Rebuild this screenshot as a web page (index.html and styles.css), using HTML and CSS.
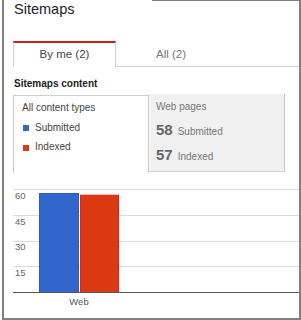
FILE: index.html
```html
<!DOCTYPE html>
<html>
<head>
<meta charset="utf-8">
<link rel="stylesheet" href="styles.css">
</head>
<body>
<div class="frame">
  <h1 class="title">Sitemaps</h1>
  <div class="tabs">
    <div class="tab tab-active">By me (2)</div>
    <div class="tab tab-rest">All (2)</div>
  </div>
  <div class="section-head">Sitemaps content</div>
  <div class="panels">
    <div class="panel-left">
      <div class="line">All content types</div>
      <div class="line legend"><span class="sq sq-blue"></span>Submitted</div>
      <div class="line legend"><span class="sq sq-red"></span>Indexed</div>
    </div>
    <div class="panel-right">
      <div class="pr-head">Web pages</div>
      <div class="stat"><span class="num">58</span><span class="lbl">Submitted</span></div>
      <div class="stat"><span class="num">57</span><span class="lbl">Indexed</span></div>
    </div>
  </div>
  <svg class="chart" width="286" height="138" viewBox="0 0 286 138">
    <g stroke="#dcdcdc" stroke-width="1">
      <line x1="0" y1="7.5" x2="286" y2="7.5"/>
      <line x1="0" y1="33.5" x2="286" y2="33.5"/>
      <line x1="0" y1="59.5" x2="286" y2="59.5"/>
      <line x1="0" y1="84.5" x2="286" y2="84.5"/>
    </g>
    <g class="axis-lbl">
      <text x="2" y="16.5">60</text>
      <text x="2" y="42.5">45</text>
      <text x="2" y="68">30</text>
      <text x="2" y="93.5">15</text>
    </g>
    <rect x="26.5" y="11.5" width="39" height="99" fill="#3366cc" stroke="#2a59c0"/>
    <rect x="67.5" y="13.2" width="38" height="97.3" fill="#dc3912" stroke="#e6201a"/>
    <line x1="0" y1="110.5" x2="286" y2="110.5" stroke="#555" stroke-width="1"/>
    <text class="cat-lbl" x="66" y="122.7" text-anchor="middle">Web</text>
  </svg>
</div>
</body>
</html>
```
FILE: styles.css
```css
html, body {
  margin: 0;
  padding: 0;
  background: #fff;
}
body {
  font-family: "Liberation Sans", Arial, sans-serif;
}
.frame {
  position: relative;
  box-sizing: border-box;
  margin-left: 2px;
  width: 299px;
  height: 320px;
  border-left: 2px solid #808080;
  border-right: 2px solid #808080;
  border-bottom: 2px solid #808080;
  padding-left: 9px;
  overflow: hidden;
}
.frame::before {
  content: "";
  position: absolute;
  top: 0;
  left: 148px;
  right: 0;
  height: 1px;
  background: #808080;
}
.title {
  margin: 0;
  padding-left: 1px;
  font-size: 14.5px;
  line-height: 18px;
  font-weight: normal;
  color: #222;
}
.tabs {
  display: flex;
  margin-top: 23px;
  height: 26px;
}
.tab {
  box-sizing: border-box;
  font-size: 11.5px;
  line-height: 23px;
}
.tab-active {
  width: 103px;
  border-top: 2px solid #d91a1a;
  border-left: 1px solid #d0d0d0;
  border-right: 1px solid #d0d0d0;
  text-align: center;
  color: #444;
}
.tab-rest {
  flex: 1;
  padding-top: 2px;
  padding-left: 40px;
  border-bottom: 1px solid #d0d0d0;
  color: #777;
}
.section-head {
  margin-top: 10px;
  padding-left: 1px;
  font-size: 10px;
  font-weight: bold;
  line-height: 14px;
  color: #222;
}
.panels {
  display: flex;
  align-items: flex-start;
  margin-top: 3px;
  height: 79px;
}
.panel-left {
  box-sizing: border-box;
  width: 136px;
  height: 78px;
  margin-top: 1px;
  border: 1px solid #cfcfcf;
  border-bottom: none;
  padding: 2px 0 0 8px;
  font-size: 10px;
  color: #444;
}
.line {
  line-height: 19.5px;
}
.legend {
  display: flex;
  align-items: center;
}
.sq {
  display: block;
  width: 6px;
  height: 6px;
  margin: 2px 6px 0 1px;
}
.sq-blue { background: #3366cc; }
.sq-red { background: #dc3912; }
.panel-right {
  box-sizing: border-box;
  width: 136px;
  height: 78px;
  background: #f1f1f1;
  border-right: 1px solid #c8c8c8;
  border-bottom: 1px solid #d0d0d0;
  padding: 3px 0 0 7px;
  color: #777;
}
.pr-head {
  font-size: 10px;
  line-height: 20px;
}
.stat {
  font-size: 15px;
  line-height: 25px;
  height: 25px;
  white-space: nowrap;
}
.num {
  font-weight: bold;
  color: #666;
}
.lbl {
  font-size: 10px;
  line-height: 1;
  margin-left: 5px;
}
.chart {
  display: block;
  margin-top: 9px;
}
.axis-lbl text {
  font-family: "Liberation Sans", Arial, sans-serif;
  font-size: 9.5px;
  fill: #666;
}
.cat-lbl {
  font-family: "Liberation Sans", Arial, sans-serif;
  font-size: 9.5px;
  fill: #555;
}
```
